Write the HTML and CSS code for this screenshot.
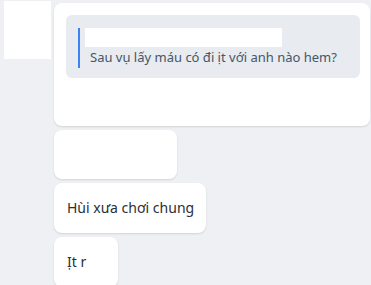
FILE: index.html
```html
<!DOCTYPE html>
<html lang="vi">
  <head>
    <meta charset="UTF-8" />
    <meta name="viewport" content="width=device-width, initial-scale=1.0" />
    <title>Tin nhắn</title>
    <link rel="stylesheet" href="styles.css">
  </head>
  <body>
    <div class="chat-row">
      <div class="avatar"></div>
      <div class="bubbles">
        <div class="bubble bubble-reply">
          <div class="quote">
            <div class="quote-inner">
              <div class="quote-name"></div>
              <div class="quote-text">Sau vụ lấy máu có đi ịt với anh nào hem?</div>
            </div>
          </div>
        </div>
        <div class="bubble bubble-empty"></div>
        <div class="bubble">Hùi xưa chơi chung</div>
        <div class="bubble">Ịt r</div>
      </div>
    </div>
  </body>
</html>
```

FILE: styles.css
```css
body {
  font-family: "Noto Sans", Arial, sans-serif;
  margin: 0;
  padding: 1px 0 0 4px;
  background-color: #eef0f3;
  overflow: hidden;
}

.chat-row {
  display: flex;
  gap: 3px;
  align-items: flex-start;
}

.avatar {
  width: 47px;
  height: 58px;
  background-color: white;
  flex-shrink: 0;
}

.bubbles {
  display: flex;
  flex-direction: column;
  align-items: flex-start;
  gap: 4px;
  padding-top: 2px;
}

.bubble {
  background-color: white;
  border-radius: 8px;
  box-shadow: 0 1px 2px rgba(0, 0, 0, 0.12);
  padding: 15px 12px 15px 13px;
  min-width: 64px;
  box-sizing: border-box;
  font-size: 14px;
  line-height: 20px;
  color: #2b2f36;
}

.bubble-reply {
  width: 316px;
  padding: 12px 10px 48px 12px;
}

.bubble-empty {
  width: 123px;
  height: 49px;
}

.quote {
  background-color: #e8ebef;
  border-radius: 6px;
  padding: 10px 12px;
}

.quote-inner {
  border-left: 2px solid #3b82f6;
  padding-left: 5px;
}

.quote-name {
  width: 197px;
  height: 19px;
  margin-top: 3px;
  background-color: white;
}

.quote-text {
  color: #475569;
  font-size: 13px;
  white-space: nowrap;
  padding-left: 5px;
  padding-bottom: 1px;
}
```
